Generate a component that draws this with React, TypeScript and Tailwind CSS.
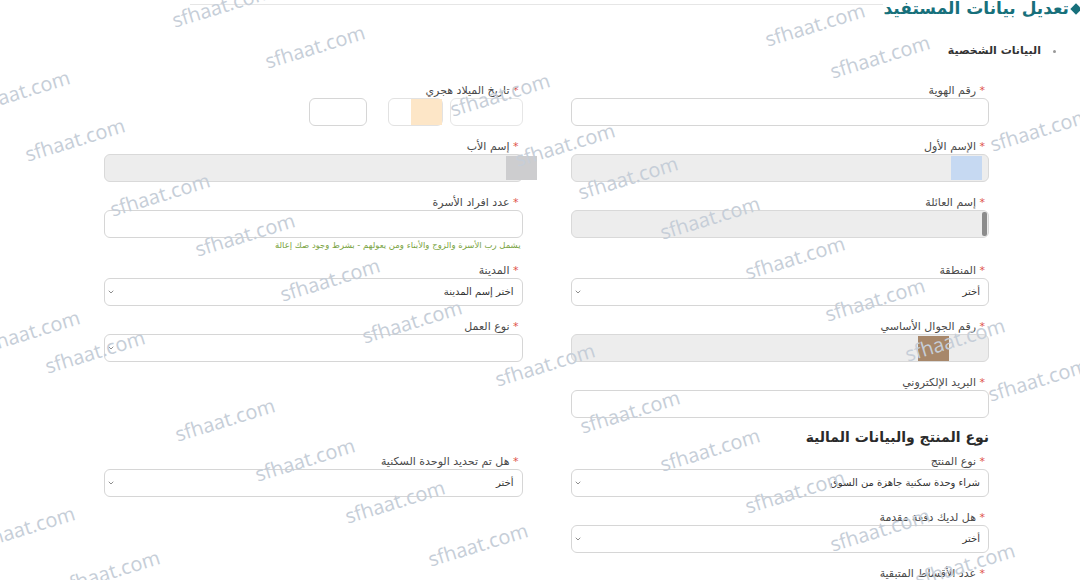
import React from "react";
import { ChevronDown } from "lucide-react";

const ar = { fontFamily: '"DejaVu Sans", sans-serif' };

// watermark centres, read off the screenshot
const marks: [number, number][] = [
  [222, 6], [315, 47], [500, 95], [565, 145], [628, 178], [710, 218], [795, 258], [875, 300], [955, 340], [1038, 380],
  [815, 25], [880, 57], [1040, 130],
  [20, 92], [75, 140], [160, 195], [245, 235], [330, 280], [412, 322], [545, 365], [630, 412], [710, 450], [795, 492], [880, 530], [965, 565],
  [30, 332], [95, 352], [225, 420], [305, 460], [395, 502], [478, 545],
  [25, 528], [110, 572],
];

function Label({ text }: { text: string }) {
  return (
    <label className="block h-[15px] pr-[4px] text-[11px] leading-[15px] text-[#4a4a4a]">
      <span className="text-[#e0524a]">* </span>
      {text}
    </label>
  );
}

function Input({ disabled, children }: { disabled?: boolean; children?: React.ReactNode }) {
  return (
    <div
      className={
        "relative h-[28px] w-full rounded-[6px] border " +
        (disabled ? "border-[#d9d9d9] bg-[#ededed]" : "border-[#d6d6d6] bg-white")
      }
    >
      {children}
    </div>
  );
}

function Select({ value }: { value?: string }) {
  return (
    <div className="flex h-[28px] w-full items-center justify-between rounded-[6px] border border-[#d6d6d6] bg-white pr-[8px] pl-[2px]">
      <span className="text-[10px] text-[#333]">{value}</span>
      <ChevronDown size={8} strokeWidth={2.5} className="text-[#777]" />
    </div>
  );
}

function Field({ label, children }: { label: string; children: React.ReactNode }) {
  return (
    <div className="flex flex-col">
      <Label text={label} />
      {children}
    </div>
  );
}

export default function App() {
  return (
    <div dir="rtl" className="relative h-[580px] w-[1080px] overflow-hidden bg-white" style={ar}>
      {/* header */}
      <div className="flex h-[24px] items-start">
        <div className="flex items-center gap-[3px]">
          <span className="mt-[-4px] block h-[8px] w-[8px] rotate-45 bg-[#17707b]" />
          <h1 className="mt-[-6px] text-[17px] font-bold leading-[28px] text-[#17707b]">تعديل بيانات المستفيد</h1>
        </div>
        <div className="ml-[190px] h-[5px] flex-1 border-b border-[#e6e6e6]" />
      </div>

      <div className="mt-[19px] flex items-center gap-[12px] pr-[24px]">
        <span className="block h-[3px] w-[3px] rounded-full bg-[#999]" />
        <span className="text-[11px] font-bold text-[#333]">البيانات الشخصية</span>
      </div>

      <div className="mr-[91px] ml-[104px] mt-[23px] flex flex-col gap-[13px]">
        <div className="grid grid-cols-2 gap-x-[48px]">
          <Field label="رقم الهوية">
            <Input />
          </Field>
          <Field label="تاريخ الميلاد هجري">
            <div className="flex h-[28px] items-center">
              <div className="h-[28px] w-[73px] rounded-[6px] border border-[#e6e6e6] bg-white" />
              <div className="relative mr-[7px] h-[28px] w-[55px] rounded-[6px] border border-[#e2e2e2] bg-white">
                <div className="absolute top-0 right-0 h-[26px] w-[31px] bg-[#fde6c7]" />
              </div>
              <div className="mr-[21px] h-[28px] w-[58px] rounded-[6px] border border-[#d6d6d6] bg-white" />
            </div>
          </Field>
        </div>

        <div className="grid grid-cols-2 gap-x-[48px]">
          <Field label="الإسم الأول">
            <Input disabled>
              <div className="absolute top-[1px] right-[6px] h-[24px] w-[31px] bg-[#c6d9f2]" />
            </Input>
          </Field>
          <Field label="إسم الأب">
            <Input disabled>
              <div className="absolute top-[1px] right-[-15px] h-[24px] w-[31px] bg-[#cdcdcf]" />
            </Input>
          </Field>
        </div>

        <div className="grid grid-cols-2 gap-x-[48px]">
          <Field label="إسم العائلة">
            <Input disabled>
              <div className="absolute top-[1px] right-[1px] h-[24px] w-[5px] rounded-[2px] bg-[#8c8c8c]" />
            </Input>
          </Field>
          <div className="flex flex-col">
            <Label text="عدد افراد الأسرة" />
            <Input />
            <p className="h-[12px] pr-[2px] text-[8.5px] leading-[14px] text-[#7aa443]">
              يشمل رب الأسرة والزوج والأبناء ومن يعولهم - بشرط وجود صك إعالة
            </p>
          </div>
        </div>

        <div className="grid grid-cols-2 gap-x-[48px]">
          <Field label="المنطقة">
            <Select value="أختر" />
          </Field>
          <Field label="المدينة">
            <Select value="اختر إسم المدينة" />
          </Field>
        </div>

        <div className="grid grid-cols-2 gap-x-[48px]">
          <Field label="رقم الجوال الأساسي">
            <Input disabled>
              <div className="absolute top-[1px] right-[39px] h-[25px] w-[31px] bg-[#a7876a]" />
            </Input>
          </Field>
          <Field label="نوع العمل">
            <Select />
          </Field>
        </div>

        <div className="grid grid-cols-2 gap-x-[48px]">
          <Field label="البريد الإلكتروني">
            <Input />
          </Field>
          <div />
        </div>

        <h2 className="mt-[-5px] mb-[-7px] h-[22px] text-[14px] font-bold leading-[22px] text-[#2a2a2a]">
          نوع المنتج والبيانات المالية
        </h2>

        <div className="grid grid-cols-2 gap-x-[48px]">
          <Field label="نوع المنتج">
            <Select value="شراء وحدة سكنية جاهزة من السوق" />
          </Field>
          <Field label="هل تم تحديد الوحدة السكنية">
            <Select value="أختر" />
          </Field>
        </div>

        <div className="grid grid-cols-2 gap-x-[48px]">
          <Field label="هل لديك دفعة مقدمة">
            <Select value="أختر" />
          </Field>
          <div />
        </div>

        <div className="grid grid-cols-2 gap-x-[48px]">
          <Field label="عدد الأقساط المتبقية">
            <Input />
          </Field>
          <div />
        </div>
      </div>

      {/* watermark overlay */}
      <div className="pointer-events-none absolute inset-0" dir="ltr">
        {marks.map(([x, y], i) => (
          <span
            key={i}
            className="absolute -translate-x-1/2 -translate-y-1/2 -rotate-[17deg] whitespace-nowrap text-[20px] leading-none text-[#c6ced8]"
            style={{ left: x, top: y, fontFamily: '"Open Sans", sans-serif' }}
          >
            sfhaat.com
          </span>
        ))}
      </div>
    </div>
  );
}
